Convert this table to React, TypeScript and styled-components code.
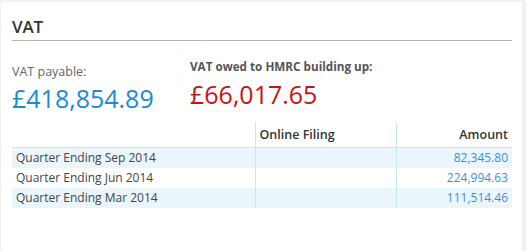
import React from "react";
import styled, { createGlobalStyle } from "styled-components";

const GlobalStyle = createGlobalStyle`
  html, body {
    margin: 0;
    padding: 0;
    background: #f2f2f2;
    font-family: "Open Sans", "Liberation Sans", sans-serif;
  }
`;

const Page = styled.div`
  padding: 2px 4px 0 1px;
  height: 251px;
  box-sizing: border-box;
`;

const Card = styled.section`
  background: #fff;
  height: 100%;
  padding: 10px 10px 0 11px;
  box-sizing: border-box;
`;

const Title = styled.h2`
  margin: 0;
  font-size: 17px;
  font-weight: 600;
  color: #333;
  line-height: 24px;
  padding: 3px 0 1px 0;
  border-bottom: 1px solid #b5b5b5;
  letter-spacing: -0.2px;
`;

const Summary = styled.div`
  display: grid;
  grid-template-columns: 178px 1fr;
  padding-top: 16px;
`;

const Stat = styled.div<{ $emphasis?: boolean }>`
  display: flex;
  flex-direction: column;
  padding-top: ${(p) => (p.$emphasis ? "0" : "6px")};
`;

const StatLabel = styled.div<{ $bold?: boolean }>`
  font-size: ${(p) => (p.$bold ? "11.7px" : "12.5px")};
  font-weight: ${(p) => (p.$bold ? 700 : 400)};
  color: ${(p) => (p.$bold ? "#555" : "#666")};
  line-height: 18px;
`;

const StatValue = styled.div<{ $tone: "blue" | "red" }>`
  font-size: 25px;
  line-height: 34px;
  color: ${(p) => (p.$tone === "blue" ? "#1b88d9" : "#cc1111")};
  margin-top: ${(p) => (p.$tone === "blue" ? "0" : "2px")};
`;

const Table = styled.table`
  width: 100%;
  margin-top: 7px;
  border-collapse: collapse;
  font-size: 12px;
  color: #444;
`;

const HeadCell = styled.th<{ $align?: "left" | "right" }>`
  font-weight: 600;
  font-size: 12.5px;
  color: #333;
  text-align: ${(p) => p.$align ?? "left"};
  height: 25px;
  padding: 0 4px;
  vertical-align: middle;
  border-bottom: 1px solid #c3e8f8;
  & + & {
    border-left: 1px solid #c3e8f8;
  }
`;

const Row = styled.tr<{ $shaded: boolean }>`
  background: ${(p) => (p.$shaded ? "#eaf6fc" : "#fff")};
  height: 20px;
`;

const Cell = styled.td<{ $amount?: boolean }>`
  padding: 0 4px;
  line-height: 19px;
  text-align: ${(p) => (p.$amount ? "right" : "left")};
  color: ${(p) => (p.$amount ? "#3a8ee0" : "#444")};
  & + & {
    border-left: 1px solid #c3e8f8;
  }
`;

const quarters = [
  { label: "Quarter Ending Sep 2014", amount: "82,345.80" },
  { label: "Quarter Ending Jun 2014", amount: "224,994.63" },
  { label: "Quarter Ending Mar 2014", amount: "111,514.46" },
];

export default function App() {
  return (
    <>
      <GlobalStyle />
      <Page>
        <Card>
          <Title>VAT</Title>
          <Summary>
            <Stat>
              <StatLabel>VAT payable:</StatLabel>
              <StatValue $tone="blue">£418,854.89</StatValue>
            </Stat>
            <Stat $emphasis>
              <StatLabel $bold>VAT owed to HMRC building up:</StatLabel>
              <StatValue $tone="red">£66,017.65</StatValue>
            </Stat>
          </Summary>
          <Table>
            <colgroup>
              <col style={{ width: 243 }} />
              <col style={{ width: 141 }} />
              <col />
            </colgroup>
            <thead>
              <tr>
                <HeadCell />
                <HeadCell>Online Filing</HeadCell>
                <HeadCell $align="right">Amount</HeadCell>
              </tr>
            </thead>
            <tbody>
              {quarters.map((q, i) => (
                <Row key={q.label} $shaded={i % 2 === 0}>
                  <Cell>{q.label}</Cell>
                  <Cell />
                  <Cell $amount>{q.amount}</Cell>
                </Row>
              ))}
            </tbody>
          </Table>
        </Card>
      </Page>
    </>
  );
}
